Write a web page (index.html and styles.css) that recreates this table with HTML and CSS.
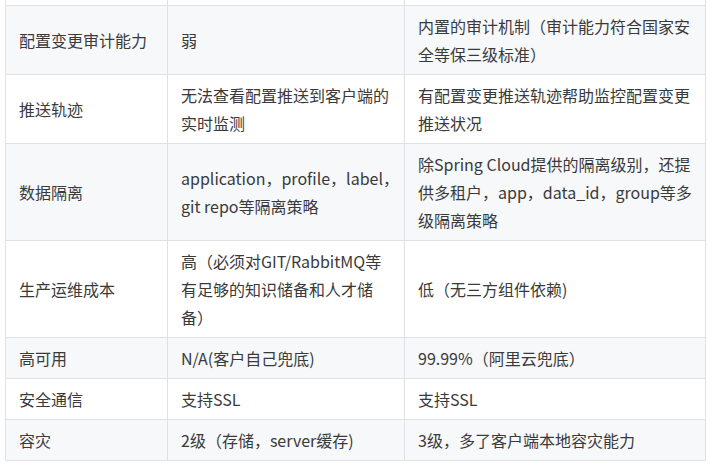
FILE: index.html
```html
<!DOCTYPE html>
<html lang="zh-CN">
<head>
<meta charset="utf-8">
<title>对比</title>
<link rel="stylesheet" href="styles.css">
</head>
<body>
<table class="cmp">
  <colgroup>
    <col class="c1">
    <col class="c2">
    <col class="c3">
  </colgroup>
  <tbody>
    <tr class="cut"><td></td><td></td><td></td></tr>
    <tr class="alt"><td>配置变更审计能力</td><td>弱</td><td>内置的审计机制（审计能力符合国家安<br>全等保三级标准）</td></tr>
    <tr><td>推送轨迹</td><td>无法查看配置推送到客户端的<br>实时监测</td><td>有配置变更推送轨迹帮助监控配置变更<br>推送状况</td></tr>
    <tr class="alt"><td>数据隔离</td><td>application，profile，label，<br>git repo等隔离策略</td><td>除Spring Cloud提供的隔离级别，还提<br>供多租户，app，data_id，group等多<br>级隔离策略</td></tr>
    <tr><td>生产运维成本</td><td>高（必须对GIT/RabbitMQ等<br>有足够的知识储备和人才储<br>备）</td><td>低（无三方组件依赖)</td></tr>
    <tr class="alt"><td>高可用</td><td>N/A(客户自己兜底)</td><td>99.99%（阿里云兜底）</td></tr>
    <tr><td>安全通信</td><td>支持SSL</td><td>支持SSL</td></tr>
    <tr class="alt"><td>容灾</td><td>2级（存储，server缓存)</td><td>3级，多了客户端本地容灾能力</td></tr>
  </tbody>
</table>
</body>
</html>
```

FILE: styles.css
```css
html, body {
  margin: 0;
  padding: 0;
  background: #ffffff;
}

body {
  font-family: "Noto Sans CJK SC", "Noto Sans", sans-serif;
  font-size: 16px;
  color: #3a3a3a;
}

.cmp {
  margin-left: 5px;
  width: 700px;
  border-collapse: collapse;
  table-layout: fixed;
}

.c1 { width: 162px; }
.c2 { width: 237px; }
.c3 { width: 301px; }

.cmp td {
  border: 1px solid #dfe2e5;
  padding: 6px 13px;
  line-height: 28px;
  vertical-align: middle;
  white-space: nowrap;
  text-align: left;
}

.cmp .cut td {
  border-top: 0;
  padding: 0;
  height: 5px;
  line-height: 5px;
}

.cmp .alt td {
  background: #f6f8fa;
}
```
